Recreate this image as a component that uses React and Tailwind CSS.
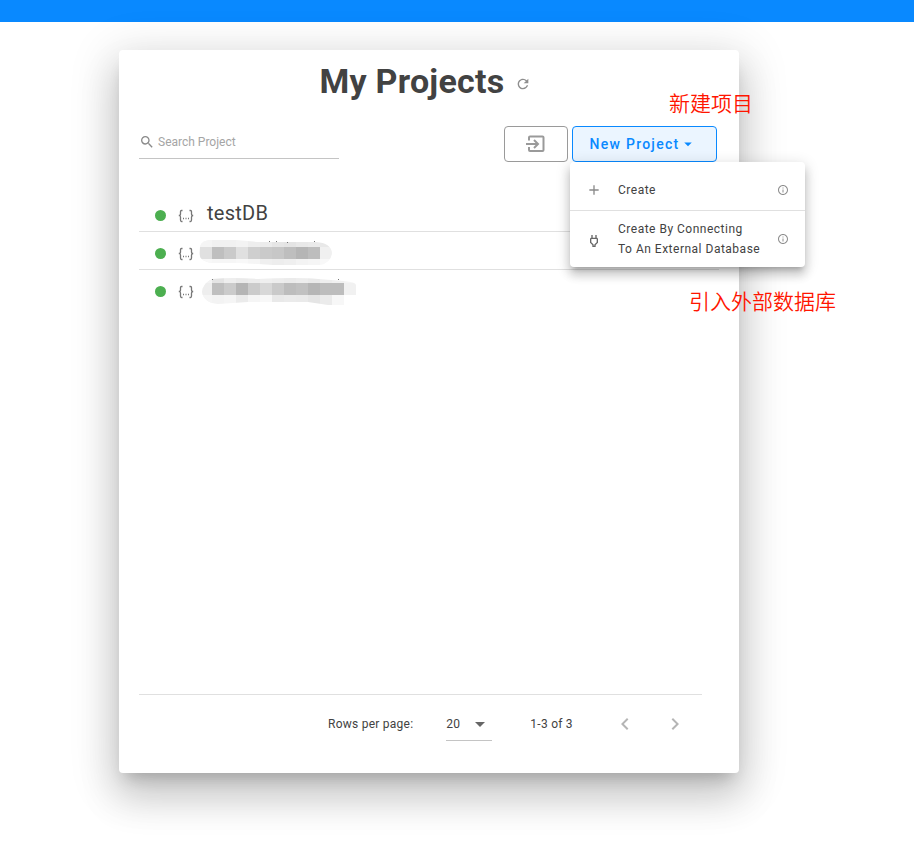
import { useState } from 'react';
import { MdAdd, MdArrowDropDown, MdChevronLeft, MdChevronRight, MdInfoOutline, MdRefresh, MdSearch } from 'react-icons/md';

// Hidden names: three rows of 12px blocks, cut to a brush-stroke outline
const hiddenNames = {
    first: {
        top: 15,
        outline: 'M2 15Q3 8 14 8H38L60 10H118Q133 11 134 21Q133 31 122 33H75L60 32L40 31H14Q2 30 1 21Z',
        blocks: [
            ['#f5f5f5', '#f1f1f1', '#f1f1f1', '#f3f3f3', '#eeeeee', '#ececec', '#e6e6e6', '#e4e4e4', '#e8e8e8', '#eaeaea', '#e8e8e8', '#f3f3f3'],
            ['#e0e0e0', '#bfbfbf', '#cacaca', '#e0e0e0', '#cfcfcf', '#cacaca', '#c7c7c7', '#bebebe', '#b5b5b5', '#bdbdbd', '#f0f0f0', '#f0f0f0'],
            ['#f8f8f8', '#f6f6f6', '#f6f6f6', '#f8f8f8', '#f5f5f5', '#efefef', '#ededed', '#efefef', '#f3f3f3', '#f5f5f5', '#f8f8f8', '#f8f8f8'],
        ],
        specks: [[71, 9], [78, 9], [89, 10], [116, 9]],
    },
    second: {
        top: 13,
        outline: 'M14 9Q35 7 60 9Q100 7 120 9L146 11Q158 12 158 15V25H146V35H130L110 32H74L50 32L20 34Q6 33 4 22Q5 13 14 9Z',
        blocks: [
            ['#f3f3f3', '#e4e4e4', '#eeeeee', '#eaeaea', '#ececec', '#efefef', '#ededed', '#ebebeb', '#ededed', '#eaeaea', '#eeeeee', '#f1f1f1', '#f5f5f5'],
            ['#eeeeee', '#bfbfbf', '#cbcbcb', '#b5b5b5', '#cbcbcb', '#d8d8d8', '#cacaca', '#bdbdbd', '#c1c1c1', '#b6b6b6', '#bdbdbd', '#bdbdbd', '#f1f1f1'],
            ['#f5f5f5', '#f3f3f3', '#f5f5f5', '#ebebeb', '#f5f5f5', '#f8f8f8', '#e9e9e9', '#ebebeb', '#eaeaea', '#e5e5e5', '#ebebeb', '#f7f7f7', '#ffffff'],
        ],
        specks: [[14, 9], [140, 9]],
    },
};

const projects = [
    { id: 1, name: 'testDB' },
    { id: 2, hidden: 'first' },
    { id: 3, hidden: 'second' },
];

const HiddenName = ({ kind }) => {
    const { top, outline, blocks, specks } = hiddenNames[kind];
    return (
        <svg width="160" height="38" viewBox="0 0 160 38" role="img" aria-label="Hidden project name">
            <clipPath id={kind}>
                <path d={outline} />
            </clipPath>
            <g clipPath={`url(#${kind})`} shapeRendering="crispEdges">
                <rect width="14" height="38" fill="#f3f3f3" />
                {blocks.map((row, r) =>
                    row.map((fill, c) => (
                        <rect key={`${r}-${c}`} x={2 + c * 12} y={top + (r - 1) * 12} width="12" height="12" fill={fill} />
                    ))
                )}
            </g>
            {specks.map(([x, y]) => (
                <rect key={x} x={x} y={y} width="1" height="1" fill="#777" />
            ))}
        </svg>
    );
};

const ImportIcon = () => (
    <svg width="20" height="20" viewBox="0 0 20 20" fill="none" stroke="currentColor" strokeWidth="2" aria-hidden="true">
        <path d="M3 6.500V3.500Q3 2.500 4 2.500H16.500Q17.500 2.500 17.500 3.500V16Q17.500 17 16.500 17H4Q3 17 3 16V13M0 10H11.500M8 6L12 10L8 14" />
    </svg>
);

const PlugIcon = () => (
    <svg width="16" height="16" viewBox="0 0 24 24" fill="currentColor" aria-hidden="true">
        <path d="M16 7V3h-2v4h-4V3H8v4C7 7 6 8 6 9v5.500L9.500 18v3h5v-3l3.500-3.500V9c0-1-1-2-2-2zm0 6.700-3.500 3.500V19h-1v-1.800L8 13.700V9h8z" />
    </svg>
);

const BracesIcon = () => (
    <svg width="16" height="14" viewBox="0 0 16 14" fill="none" stroke="currentColor" strokeWidth="1.3" aria-hidden="true">
        <path d="M4.500 1.500H3.500Q2.500 1.500 2.500 2.500V5Q2.500 6.500 .8 6.500Q2.500 6.500 2.500 8V11Q2.500 12.500 3.500 12.500H4.500M11.500 1.500H12.500Q13.500 1.500 13.500 2.500V5Q13.500 6.500 15.200 6.500Q13.500 6.500 13.500 8V11Q13.500 12.500 12.500 12.500H11.500" />
        <path d="M5 9.500h1M7.500 9.500h1M10 9.500h1" />
    </svg>
);

const App = () => {
    const [search, setSearch] = useState('');
    const [rows, setRows] = useState('20');

    return (
        <div className="min-h-screen bg-white font-['Roboto',sans-serif] text-[#424242]">
            <header className="h-[22px] bg-[#0989ff]" />

            <main className="pt-7 pb-20 pl-[119px] pr-[175px]">
                <div className="relative flex flex-col rounded bg-white px-5 shadow-[0_11px_15px_-7px_rgba(0,0,0,0.2),0_24px_38px_3px_rgba(0,0,0,0.14),0_9px_46px_8px_rgba(0,0,0,0.12)]">
                    <div className="flex items-center justify-center gap-2.5 pt-[7px] pr-2">
                        <h1 className="text-[34px] font-bold leading-[48px] tracking-[0.25px]">My Projects</h1>
                        <button type="button" aria-label="Refresh" className="mt-1.5 text-[#8e8e8e]">
                            <MdRefresh size={16} />
                        </button>
                    </div>

                    <div className="mt-[21px] flex items-start justify-between pr-[2px]">
                        <label className="flex h-[33px] w-[200px] items-center gap-[3px] border-b border-[#c4c4c4] text-[#8a8a8a]">
                            <MdSearch size={16} />
                            <input
                                type="text"
                                aria-label="Search Project"
                                placeholder="Search Project"
                                value={search}
                                onChange={(e) => setSearch(e.target.value)}
                                className="min-w-0 flex-1 text-xs text-[#424242] outline-none placeholder:text-[#a5a5a5]"
                            />
                        </label>
                        <div className="flex gap-1">
                            <button type="button" aria-label="Import project" className="flex h-9 w-16 items-center justify-center rounded border border-[#9a9a9a] text-[#9a9a9a]">
                                <ImportIcon />
                            </button>
                            <div className="relative">
                                <button type="button" aria-expanded="true" className="flex h-9 w-[145px] items-center justify-center rounded border border-[#0989ff] bg-[#ebf5ff] pr-[2px] text-sm font-medium tracking-[0.09em] text-[#0989ff]">
                                    New Project
                                    <MdArrowDropDown size={18} />
                                </button>
                                <div role="menu" className="absolute top-9 -left-[2px] z-10 w-[235px] rounded bg-white text-xs leading-5 tracking-[0.5px] shadow-[0_5px_5px_-3px_rgba(0,0,0,0.2),0_8px_10px_1px_rgba(0,0,0,0.14),0_3px_14px_2px_rgba(0,0,0,0.12)]">
                                    <button type="button" role="menuitem" className="flex w-full items-center border-b border-[#e0e0e0] px-4 pt-[18px] pb-[10px] text-left">
                                        <span className="flex w-8 text-[#8a8a8a]"><MdAdd size={16} /></span>
                                        <span className="flex-1">Create</span>
                                        <MdInfoOutline size={12} className="text-[#8e8e8e]" />
                                    </button>
                                    <button type="button" role="menuitem" className="flex w-full items-center px-4 py-2 text-left">
                                        <span className="flex w-8 pt-1 text-[#666]"><PlugIcon /></span>
                                        <span className="flex-1">Create By Connecting<br />To An External Database</span>
                                        <MdInfoOutline size={12} className="text-[#8e8e8e]" />
                                    </button>
                                </div>
                            </div>
                        </div>
                    </div>

                    <ul className="mt-8 min-h-[500px]">
                        {projects.map((project) => (
                            <li key={project.id} className="flex h-[38px] items-center border-b border-[#e0e0e0] pl-4 last:border-transparent">
                                <span className="mt-1.5 size-[11px] rounded-full bg-[#4caf50]" />
                                <span className="mt-1.5 ml-3 text-[#777]"><BracesIcon /></span>
                                {project.name ? (
                                    <a href="#project" className="ml-[13px] text-xl tracking-[0.25px]">{project.name}</a>
                                ) : (
                                    <span className="ml-1"><HiddenName kind={project.hidden} /></span>
                                )}
                            </li>
                        ))}
                    </ul>

                    <footer className="mr-[17px] flex h-[79px] items-start border-t border-[#e0e0e0] pl-[189px] text-xs tracking-[0.25px]">
                        <label htmlFor="rows" className="mt-[19px] leading-5">Rows per page:</label>
                        <div className="relative ml-[33px] mt-3 flex items-center">
                            <select
                                id="rows"
                                value={rows}
                                onChange={(e) => setRows(e.target.value)}
                                className="h-[34px] w-[46px] appearance-none border-b border-[#c4c4c4] pt-px"
                            >
                                <option>20</option>
                                <option>50</option>
                            </select>
                            <MdArrowDropDown size={24} className="pointer-events-none absolute right-0 text-[#666]" />
                        </div>
                        <span className="ml-[38px] mt-[19px] leading-5">1-3 of 3</span>
                        <button type="button" aria-label="Previous page" className="ml-10 mt-[17px] text-[#b5b5b5]">
                            <MdChevronLeft size={24} />
                        </button>
                        <button type="button" aria-label="Next page" className="ml-[26px] mt-[17px] text-[#b5b5b5]">
                            <MdChevronRight size={24} />
                        </button>
                    </footer>

                    <p className="absolute top-[38px] left-[550px] z-20 whitespace-nowrap font-['Noto_Sans_CJK_SC',sans-serif] text-[21px] font-[350] leading-7 text-[#ff1500]">新建项目</p>
                    <p className="absolute top-[236px] left-[570px] z-20 whitespace-nowrap font-['Noto_Sans_CJK_SC',sans-serif] text-[21px] font-[350] leading-7 text-[#ff1500]">引入外部数据库</p>
                </div>
            </main>
        </div>
    );
};

export default App;
